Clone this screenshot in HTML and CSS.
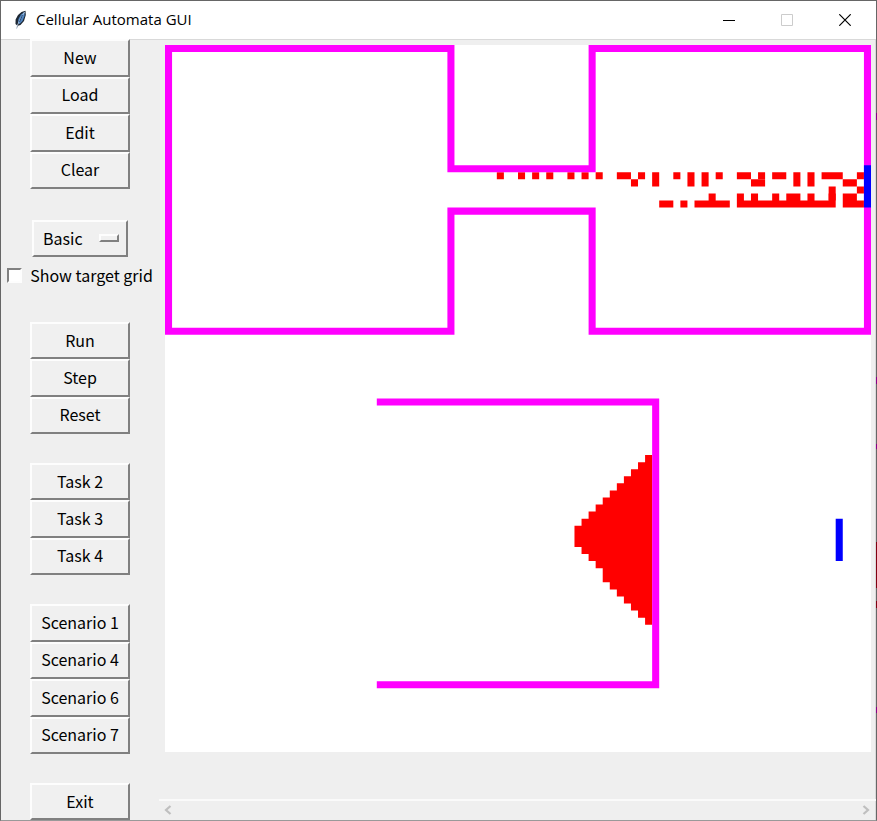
FILE: index.html
```html
<!DOCTYPE html>
<html lang="en">
<head>
<meta charset="utf-8">
<title>Cellular Automata GUI</title>
<link rel="stylesheet" href="styles.css">
</head>
<body>
<div class="window">
  <header class="titlebar">
    <svg class="feather" viewBox="0 0 14 20" aria-hidden="true">
      <path d="M2.500 19 3.200 15.500 1.500 14 1.600 9.500 4 5 7.500 2 11.500 .7 11.800 5 10 11 6.500 15 4 15.700Z" fill="#1d2733"/>
      <path d="M4 13 4.500 9 7 4.500 10.800 1.700 10.500 6 8.500 11 5.500 14Z" fill="#4f86c4"/>
      <path d="M10.500 2 7 8 3.500 15 2.500 19" fill="none" stroke="#c5d6ea" stroke-width=".8"/>
      <path d="M8.500 5 5.500 12" stroke="#28476f" stroke-width="1"/>
    </svg>
    <h1>Cellular Automata GUI</h1>
    <div class="controls">
      <button aria-label="Minimize"><svg viewBox="0 0 12 12"><path d="M0 6.500H12" stroke="#000"/></svg></button>
      <button aria-label="Maximize" disabled><svg viewBox="0 0 12 12"><path d="M.5 .5H11.500V11.500H.5Z" fill="none" stroke="#ccc"/></svg></button>
      <button aria-label="Close"><svg viewBox="0 0 12 12"><path d="M.3 .3 11.700 11.700M11.700 .3 .3 11.700" stroke="#000" stroke-width="1.200"/></svg></button>
    </div>
  </header>
  <div class="content">
    <aside class="sidebar">
      <div class="group four"><button>New</button><button>Load</button><button>Edit</button><button>Clear</button></div>
      <div class="options">
        <div class="picker">
          <select aria-label="Algorithm"><option>Basic</option></select>
          <span class="indicator"></span>
        </div>
        <label class="check"><input type="checkbox">Show target grid</label>
      </div>
      <div class="group three"><button>Run</button><button>Step</button><button>Reset</button></div>
      <div class="group three"><button>Task 2</button><button>Task 3</button><button>Task 4</button></div>
      <div class="group four"><button>Scenario 1</button><button>Scenario 4</button><button>Scenario 6</button><button>Scenario 7</button></div>
      <div class="group"><button>Exit</button></div>
    </aside>
    <main class="stage">
      <svg class="board" viewBox="0 0 100 100" preserveAspectRatio="none" role="img" aria-label="Cell grid">
        <g fill="#f00">
          <!-- row 18 -->
          <path d="M47 18h1v1h-1zM50 18h1v1h-1zM52 18h1v1h-1zM54 18h1v1h-1zM57 18h1v1h-1zM59 18h1v1h-1zM61 18h1v1h-1zM64 18h2v1h-2zM67 18h1v1h-1zM69 18h1v2h-1zM72 18h1v1h-1zM74 18h1v2h-1zM76 18h1v2h-1zM78 18h1v1h-1zM81 18h2v1h-2zM84 18h1v1h-1zM86 18h2v1h-2zM89 18h1v2h-1zM91 18h1v2h-1zM93 18h3v1h-3zM98 18h1v1h-1z"/>
          <!-- rows 19 and 20 -->
          <path d="M66 19h1v1h-1zM83 19h2v1h-2zM96 19h2v1h-2zM98 20h1v1h-1zM94 20h1v2h-1z"/>
          <!-- rows 21 and 22 -->
          <path d="M70 22h2v1h-2zM73 22h1v1h-1zM75 22h2v-1h1v1h2v1h-5zM81 21h1v1h1v-1h1v1h2v-1h1v1h1v-1h2v1h1v-1h1v1h2v-1h1v2h-14zM96 21h2v1h1v1h-3z"/>
          <path d="M69 58H68V59H67V60H66V61H65V62H64V63H63V64H62V65H61V66H60V67H59V68H58V71H59V72H60V73H61V74H62V76H63V77H64V78H65V79H66V80H67V81H68V82H69Z"/>
        </g>
        <path fill="#f0f" fill-rule="evenodd" d="M0 0H41V17H60V0H100V41H60V24H41V41H0ZM1 1V40H40V23H61V40H99V1H61V18H40V1Z"/>
        <path fill="#f0f" d="M30 50H70V91H30V90H69V51H30Z"/>
        <path fill="#00f" d="M99 17h1v6h-1zM95 67h1v6h-1z"/>
      </svg>
      <div class="scroll">
        <button aria-label="Scroll left"><svg viewBox="0 0 8 10"><path d="M6.500 1 2 5 6.500 9" fill="none" stroke="#bfbfbf" stroke-width="2.200"/></svg></button>
        <button aria-label="Scroll right"><svg viewBox="0 0 8 10"><path d="M1.500 1 6 5 1.500 9" fill="none" stroke="#bfbfbf" stroke-width="2.200"/></svg></button>
      </div>
    </main>
  </div>
  <div class="edge"></div>
</div>
</body>
</html>
```
FILE: styles.css
```css
* { box-sizing: border-box; }
body {
  margin: 0;
  font-family: "Noto Sans CJK SC", "Noto Sans", sans-serif;
  font-size: 16px;
  color: #000;
  background: #efefef;
}
button, select, input { font: inherit; color: inherit; margin: 0; }
.window {
  position: relative;
  display: flex;
  flex-direction: column;
  min-height: 100vh;
  border: 1px solid #666;
  border-bottom-color: #999;
}
.titlebar {
  display: flex;
  align-items: center;
  height: 38px;
  padding-left: 13px;
  background: #fff;
}
.feather { width: 14px; height: 20px; }
h1 {
  margin: 0 0 0 8px;
  padding-bottom: 2px;
  font-family: "Open Sans", "Noto Sans", sans-serif;
  font-size: 15px;
  line-height: 24px;
  font-weight: 400;
}
.controls { display: flex; margin-left: auto; padding-right: 2px; }
.controls button {
  display: grid;
  place-items: center;
  width: 58px;
  height: 38px;
  padding: 0;
  border: 0;
  background: none;
}
.controls svg { width: 12px; height: 12px; }
.content {
  display: flex;
  flex: 1;
  box-shadow: inset -1px 1px #d9d9d9;
}
.sidebar {
  display: flex;
  flex-direction: column;
  align-items: center;
  gap: 29px;
  width: 158px;
  flex: none;
}
.group {
  display: grid;
  grid-auto-rows: 1fr;
  width: 100px;
  height: 37px;
}
.group.three { height: 112px; }
.group.four { height: 150px; }
.group button, .picker select {
  padding: 0 0 2px;
  line-height: 20px;
  background: #f0f0f0;
  border: 2px solid;
  border-color: #fdfdfd #808080 #808080 #fdfdfd;
  border-radius: 0;
}
.options {
  display: flex;
  flex-direction: column;
  align-items: center;
  gap: 8px;
  height: 73px;
  margin-top: 2px;
}
.picker { position: relative; width: 96px; height: 37px; }
.picker select {
  appearance: none;
  width: 100%;
  height: 100%;
  padding-left: 9px;
}
.indicator {
  position: absolute;
  right: 9px;
  top: 14px;
  width: 20px;
  height: 8px;
  border: 2px solid;
  border-color: #fdfdfd #808080 #808080 #fdfdfd;
  pointer-events: none;
}
.check {
  display: flex;
  align-items: center;
  gap: 8px;
  line-height: 20px;
  white-space: nowrap;
}
.check input {
  appearance: none;
  width: 15px;
  height: 15px;
  background: #fff;
  border: 2px solid;
  border-color: #808080 #fdfdfd #fdfdfd #808080;
}
.stage {
  display: flex;
  flex-direction: column;
  flex: 1;
  min-width: 0;
}
.board {
  display: block;
  margin: 6px 5px 0 6px;
  aspect-ratio: 706 / 707;
  background: #fff;
}
.scroll {
  display: flex;
  justify-content: space-between;
  align-items: center;
  height: 21px;
  margin-top: auto;
  padding: 0 6px 2px 5px;
  border-top: 2px solid #fafafa;
}
.scroll button { display: flex; padding: 0; border: 0; background: none; }
.scroll svg { width: 8px; height: 10px; }
/* Slivers of the desktop seen past the window frame. */
.edge {
  position: absolute;
  top: 0;
  right: -1px;
  bottom: 0;
  width: 1px;
  background: linear-gradient(#666 112px, #808 112px 119px, #666 119px 376px, #808 376px 383px, #666 383px 443px, #808 443px 448px, #666 448px 541px, #800010 541px 587px, #666 587px 600px, #800010 600px 607px, #666 607px 706px, #808 706px 712px, #666 712px);
}
```
